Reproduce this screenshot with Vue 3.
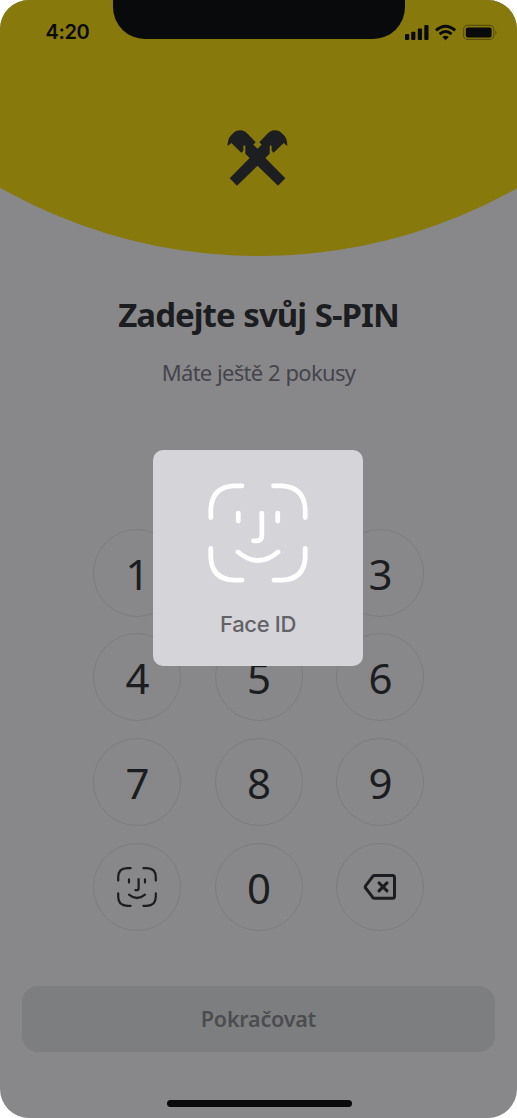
<script setup>
const keys = ['1', '2', '3', '4', '5', '6', '7', '8', '9', 'face', '0', 'delete']
</script>

<template>
  <main class="phone">
    <header class="hero">
      <div class="dome"></div>
      <div class="notch"></div>
      <div class="status">
        <span class="time">4:20</span>
        <svg class="signals" width="94" height="18" viewBox="0 0 94 18">
          <g fill="#090a0c">
            <rect x="1" y="11" width="4.200" height="6" rx="1" />
            <rect x="7.2" y="8.8" width="4.200" height="8.2" rx="1" />
            <rect x="13.8" y="5.6" width="4.200" height="11.4" rx="1" />
            <rect x="20.3" y="2" width="4.200" height="15" rx="1" />
            <path d="M41.6 17.2 L38.4 14 Q41.6 11.400 44.8 14 Z" />
          </g>
          <g fill="none" stroke="#090a0c" stroke-width="2.900">
            <path d="M32 7.400 Q41.6 -1 51.200 7.400" />
            <path d="M35.6 11.2 Q41.6 6 47.6 11.2" />
          </g>
          <rect x="59.6" y="2.4" width="30.200" height="14" rx="4" fill="none" stroke="#574f0b" stroke-width="1.1" />
          <rect x="61.8" y="4.6" width="25.800" height="9.8" rx="2" fill="#090a0c" />
          <path d="M91.400 7 Q93.600 9.400 91.400 11.800 Z" fill="#574f0b" />
        </svg>
      </div>
      <svg class="logo" width="68" height="64" viewBox="0 0 204 192">
        <path
          fill="#1d1e21"
          d="M11 60 C11 43 15 33 25 24 C33 16 39 13 49 13 C58 13 65 17 72 25 L95 49 L88 56 L100.500 68 L113 56 L106 49 L129 25 C136 17 143 13 152 13 C162 13 168 16 176 24 C186 33 190 43 190 60 L179 51 L149 80 L143 74 L143 61 Q140 54 137 61 L137 83 L124 96 L184 157 L162 179 L100.500 119 L39 179 L17 157 L77 96 L64 83 L64 61 Q61 54 58 61 L58 74 L52 80 L22 51 Z"
        />
      </svg>
    </header>

    <h1 class="title"><span>Zadejte svůj S-PIN</span></h1>
    <p class="subtitle"><span>Máte ještě 2 pokusy</span></p>

    <section class="keypad">
      <button v-for="key in keys" :key="key" class="key">
        <svg v-if="key === 'face'" class="key-face" width="40" height="40" viewBox="0 0 100 100">
          <g class="strokes">
            <path d="M3 34V26Q3 3 26 3H34M66 3H74Q97 3 97 26V34M97 66V74Q97 97 74 97H66M34 97H26Q3 97 3 74V66" />
            <path d="M30 31V39M70 31V39M54 30V53Q54 58 49 58H46M30 69Q50 86 70 69" />
          </g>
        </svg>
        <svg v-else-if="key === 'delete'" class="key-delete" width="34" height="28" viewBox="0 0 34 28">
          <g fill="none" stroke="#1c1d20" stroke-width="3" stroke-linejoin="round" stroke-linecap="round">
            <path d="M11.500 2.600H29.500Q31.500 2.600 31.500 4.600V23.200Q31.500 25.200 29.500 25.200H11.500Q10.500 25.200 9.800 24.400L2.600 15Q1.800 13.900 2.600 12.800L9.800 3.400Q10.500 2.600 11.500 2.600Z" />
            <path d="M16 9.900L24 17.900M24 9.900L16 17.900" />
          </g>
        </svg>
        <span v-else>{{ key }}</span>
      </button>
    </section>

    <button class="continue"><span>Pokračovat</span></button>
    <div class="home"></div>

    <div class="dialog">
      <svg class="dialog-face" width="100" height="100" viewBox="0 0 100 100">
        <g class="strokes">
          <path d="M2.800 34.500V26Q4 4 26 2.800H34M65.500 2.800H74Q96 4 97.200 26V34.500M97.200 65.500V75Q96 96 74 97.200H66M34 97.200H26Q4 96 2.800 75V65.500" />
          <path d="M30.300 30.200V38M69.700 30.200V38M53.800 30.200V53Q53.800 57.800 49 57.800H45.500M30 69Q50 86 70 69" />
        </g>
      </svg>
      <span class="dialog-label">Face ID</span>
    </div>
  </main>
</template>

<style>
body {
  margin: 0;
  background: #fff;
}
</style>

<style scoped>
.phone {
  position: relative;
  width: 517px;
  height: 1118px;
  overflow: hidden;
  border-radius: 29px;
  background: #88888a;
  display: flex;
  flex-direction: column;
  align-items: center;
  font-family: "Noto Sans", sans-serif;
  color: #1c1d20;
}
.hero {
  position: relative;
  flex: none;
  width: 517px;
  height: 256px;
  overflow: hidden;
  display: flex;
  flex-direction: column;
  align-items: center;
}
.dome {
  position: absolute;
  left: 50%;
  bottom: 0.5px;
  width: 1050px;
  height: 1050px;
  margin-left: -525px;
  border-radius: 50%;
  background: #87790b;
}
.notch {
  position: absolute;
  top: 0;
  left: 112.500px;
  width: 292px;
  height: 38.500px;
  border-radius: 0 0 32px 32px;
  background: #090a0c;
}
.status {
  position: relative;
  width: 100%;
  height: 64px;
  box-sizing: border-box;
  padding: 0 19px 0 45.500px;
  display: flex;
  align-items: center;
  justify-content: space-between;
}
.time {
  font: 600 20px/24px Inter, sans-serif;
  letter-spacing: -0.4px;
  color: #090a0c;
}
.logo {
  position: relative;
  margin-top: 62px;
  margin-right: 1px;
}
.title {
  margin: 37px 0 0;
  font-size: 33px;
  line-height: 44px;
  font-weight: 700;
  letter-spacing: -0.97px;
  word-spacing: 1px;
  white-space: nowrap;
}
.subtitle {
  margin: 19.500px 0 0;
  font-size: 22px;
  line-height: 30px;
  letter-spacing: -0.7px;
  word-spacing: 0.5px;
  color: #45444c;
  white-space: nowrap;
}
.keypad {
  flex: none;
  margin-top: 142.200px;
  display: grid;
  grid-template-columns: repeat(3, 88px);
  column-gap: 33.500px;
  row-gap: 16.700px;
}
.key {
  width: 88px;
  height: 88px;
  box-sizing: border-box;
  padding: 0;
  border: 1.500px solid #7c7c7e;
  border-radius: 50%;
  background: none;
  color: inherit;
  font: 400 42px/50px "Noto Sans", sans-serif;
  display: flex;
  align-items: center;
  justify-content: center;
}
.key span {
  margin-top: 2px;
  margin-left: 1px;
}
.strokes {
  fill: none;
  stroke-linecap: round;
  stroke-linejoin: round;
}
.key-face {
  stroke: #1c1d20;
  stroke-width: 5.500;
  margin-right: 1px;
}
.key-delete {
  margin-right: 1px;
}
.continue {
  flex: none;
  width: 473px;
  height: 66px;
  margin-top: 55.400px;
  padding: 0;
  border: 0;
  border-radius: 16px;
  background: #7d7e7f;
  color: #4c4d50;
  font: 600 21.500px/30px "Noto Sans", sans-serif;
  letter-spacing: -0.2px;
}
.home {
  width: 185px;
  height: 7px;
  margin: 48px 0 0 1px;
  border-radius: 4px;
  background: #090a0c;
}
.dialog {
  position: absolute;
  left: 153px;
  top: 450px;
  width: 210px;
  height: 216px;
  box-sizing: border-box;
  padding-top: 33px;
  border-radius: 10px;
  background: #d5d4d9;
  display: flex;
  flex-direction: column;
  align-items: center;
}
.dialog-face {
  stroke: #fff;
  stroke-width: 4.800;
}
.dialog-label {
  margin-top: 27px;
  font: 500 22px/28px Inter, sans-serif;
  letter-spacing: -0.35px;
  color: #626267;
}
</style>
